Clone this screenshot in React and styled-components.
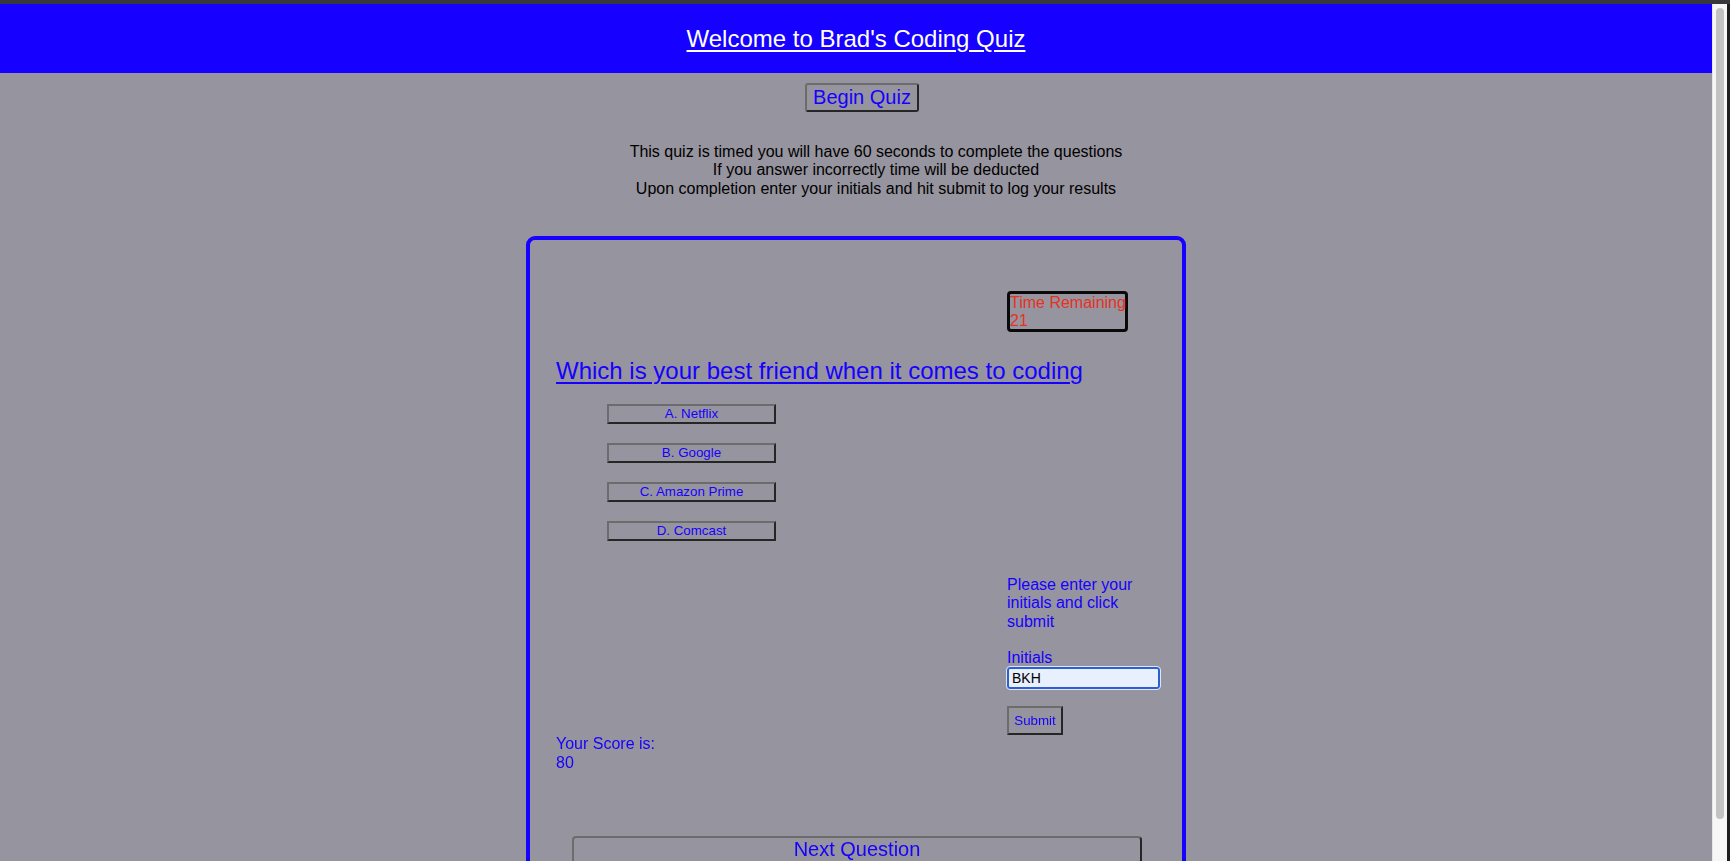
import React from 'react';
import styled, { createGlobalStyle } from 'styled-components';

const GlobalStyle = createGlobalStyle`
  html, body {
    margin: 0;
    padding: 0;
    overflow: hidden;
    background: #96949e;
  }
  body {
    font-family: "Liberation Sans", Arial, sans-serif;
  }
`;

const BLUE = '#1600ff';

// WINDOW FRAME
const Frame = styled.div`
  display: flex;
  flex-direction: column;
  width: 1730px;
  height: 861px;
  overflow: hidden;
`;

const TopStrip = styled.div`
  height: 4px;
  flex: none;
  background-color: #38383c;
`;

const Viewport = styled.div`
  display: flex;
  flex: 1;
  min-height: 0;
`;

const Page = styled.div`
  flex: 1;
  min-width: 0;
  background-color: #96949e;
  overflow: hidden;
`;

const ScrollTrack = styled.div`
  width: 18px;
  flex: none;
  box-sizing: border-box;
  padding: 4px 3px 0 3px;
  background-color: #f6f6f6;
  border-left: 1px solid #e6e6e6;
  border-right: 3px solid #1e1e20;
`;

const ScrollThumb = styled.div`
  width: 8px;
  height: 811px;
  border-radius: 4px;
  background-color: #c2c2c2;
`;

// HEADER
const Header = styled.header`
  display: flex;
  justify-content: center;
  align-items: center;
  height: 69px;
  padding-top: 1px;
  box-sizing: border-box;
  background-color: ${BLUE};
`;

const Title = styled.h1`
  margin: 0;
  color: #ffffff;
  font-size: 24px;
  font-weight: normal;
  text-decoration: underline;
  text-underline-offset: 3px;
`;

const Intro = styled.section`
  display: flex;
  flex-direction: column;
  align-items: center;
`;

const BaseButton = styled.button`
  font-family: "Liberation Sans", Arial, sans-serif;
  color: ${BLUE};
  background: transparent;
  border: 2px solid;
  border-color: #6c6c6c #262626 #262626 #6c6c6c;
  cursor: pointer;
`;

const BeginButton = styled(BaseButton)`
  margin: 10px 0 0 12px;
  font-size: 20px;
  line-height: 23px;
  padding: 1px 6px;
  border-radius: 3px;
`;

const Rules = styled.p`
  margin: 31px 0 0;
  padding-left: 40px;
  font-size: 16px;
  line-height: 18.4px;
  color: #000000;
  text-align: center;
`;

// QUIZ CARD
const Card = styled.main`
  display: flex;
  flex-direction: column;
  width: 660px;
  margin: 38px auto 0;
  padding: 0 0 60px 26px;
  box-sizing: border-box;
  border: 4px solid ${BLUE};
  border-radius: 9px;
`;

const Side = styled.div`
  margin-left: 451px;
  width: 160px;
`;

const Timer = styled.div`
  margin-top: 51px;
  width: 115px;
  border: 3px solid #0a0a0a;
  border-radius: 4px;
  color: #e8311f;
  font-size: 16px;
  line-height: 17.5px;
  white-space: nowrap;
`;

const Question = styled.h2`
  margin: 25px 0 0;
  font-size: 24px;
  line-height: 27.6px;
  font-weight: normal;
  color: ${BLUE};
  text-decoration: underline;
  text-underline-offset: 3px;
`;

const Answers = styled.div`
  display: flex;
  flex-direction: column;
  gap: 19px;
  margin: 19px 0 0 51px;
`;

const AnswerButton = styled(BaseButton)`
  width: 169px;
  height: 20px;
  padding: 0;
  font-size: 13.33px;
  line-height: 16px;
`;

const Prompt = styled.p`
  margin: 35px 0 0;
  width: 150px;
  font-size: 16px;
  line-height: 18.4px;
  color: ${BLUE};
`;

const Label = styled.label`
  display: block;
  margin-top: 18px;
  font-size: 16px;
  line-height: 18.4px;
  color: ${BLUE};
`;

const InitialsInput = styled.input`
  display: block;
  width: 153px;
  height: 22px;
  box-sizing: border-box;
  padding: 0 3px;
  border: 2px solid #2c5fd3;
  border-radius: 3px;
  outline: 1px solid #dfe6f6;
  background-color: #e8effd;
  font-family: "Liberation Sans", Arial, sans-serif;
  font-size: 14px;
  color: #000000;
  caret-color: #000000;
  &:focus {
    outline: 1px solid #dfe6f6;
  }
`;

const SubmitButton = styled(BaseButton)`
  display: block;
  margin-top: 17px;
  width: 56px;
  height: 29px;
  padding: 0;
  font-size: 13.33px;
`;

const Score = styled.div`
  font-size: 16px;
  line-height: 18.4px;
  color: ${BLUE};
`;

const NextButton = styled(BaseButton)`
  margin: 64px 0 0 16px;
  width: 570px;
  padding: 0 6px 1px;
  font-size: 20px;
  line-height: 23px;
  border-radius: 4px;
`;

const answers = ['A. Netflix', 'B. Google', 'C. Amazon Prime', 'D. Comcast'];

export default function App() {
  return (
    <Frame>
      <GlobalStyle />
      <TopStrip />
      <Viewport>
        <Page>
          <Header>
            <Title>Welcome to Brad's Coding Quiz</Title>
          </Header>
          <Intro>
            <BeginButton>Begin Quiz</BeginButton>
            <Rules>
              This quiz is timed you will have 60 seconds to complete the questions
              <br />
              If you answer incorrectly time will be deducted
              <br />
              Upon completion enter your initials and hit submit to log your results
            </Rules>
          </Intro>
          <Card>
            <Side>
              <Timer>
                Time Remaining
                <br />
                21
              </Timer>
            </Side>
            <Question>Which is your best friend when it comes to coding</Question>
            <Answers>
              {answers.map((a) => (
                <AnswerButton key={a}>{a}</AnswerButton>
              ))}
            </Answers>
            <Side>
              <Prompt>Please enter your initials and click submit</Prompt>
              <Label htmlFor="initials">Initials</Label>
              <InitialsInput id="initials" type="text" defaultValue="BKH" autoFocus />
              <SubmitButton>Submit</SubmitButton>
            </Side>
            <Score>
              Your Score is:
              <br />
              80
            </Score>
            <NextButton>Next Question</NextButton>
          </Card>
        </Page>
        <ScrollTrack>
          <ScrollThumb />
        </ScrollTrack>
      </Viewport>
    </Frame>
  );
}
